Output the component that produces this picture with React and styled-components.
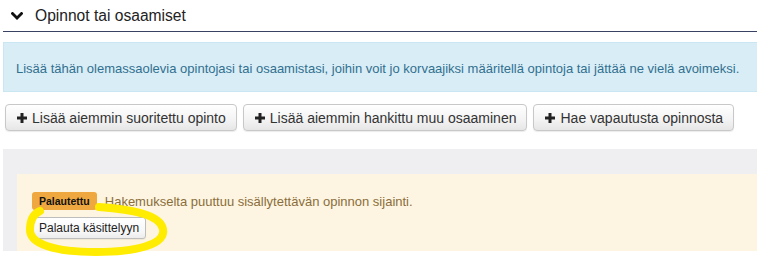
import React from "react";
import styled, { createGlobalStyle } from "styled-components";

const Global = createGlobalStyle`
  html, body { margin: 0; padding: 0; background: #fff; }
  body { font-family: "Liberation Sans", Arial, sans-serif; color: #333; }
`;

const Page = styled.div`
  position: relative;
  width: 757px;
  height: 256px;
  overflow: hidden;
  padding-left: 3px;
  box-sizing: border-box;
`;

const Header = styled.div`
  display: flex;
  align-items: center;
  height: 30px;
  padding-left: 8px;
  gap: 12px;
  border-bottom: 1px solid #3a4264;
  font-size: 15.6px;
  color: #222;
  padding-top: 1px;
  box-sizing: content-box;
`;

const Info = styled.div`
  margin-top: 10px;
  height: 50px;
  box-sizing: border-box;
  display: flex;
  align-items: center;
  padding: 2px 12px 0;
  background: #d9edf7;
  border: 1px solid #c9e6f2;
  border-right: none;
  color: #31708f;
  font-size: 13px;
  white-space: nowrap;
`;

const ButtonRow = styled.div`
  display: flex;
  gap: 6px;
  margin-top: 12px;
  padding-left: 2px;
`;

const Button = styled.button`
  display: inline-flex;
  align-items: center;
  gap: 5px;
  height: 27px;
  padding: 0 10px 0 11px;
  font-family: "Liberation Sans", Arial, sans-serif;
  font-size: 14px;
  color: #333;
  background: linear-gradient(to bottom, #ffffff 0%, #f3f3f3 60%, #e6e6e6 100%);
  border: 1px solid #c8c8c8;
  border-radius: 4px;
  box-shadow: 0 1px 1px rgba(0, 0, 0, 0.08);
  cursor: pointer;
  white-space: nowrap;
`;

const GrayArea = styled.div`
  margin-top: 18px;
  background: #efeef0;
  padding: 25px 0 0 14px;
  height: 102px;
  box-sizing: border-box;
`;

const Notice = styled.div`
  background: #fdf5e1;
  height: 77px;
  box-sizing: border-box;
  padding: 18px 15px 0;
  display: flex;
  flex-direction: column;
  align-items: flex-start;
  gap: 7px;
`;

const MessageLine = styled.div`
  display: flex;
  align-items: center;
  gap: 8px;
  font-size: 13px;
  color: #8a6d3b;
`;

const Badge = styled.span`
  display: inline-flex;
  align-items: center;
  height: 18px;
  padding: 0 7px;
  background: #efa840;
  border-radius: 3px;
  font-size: 10.5px;
  font-weight: bold;
  color: #111;
`;

const SmallButton = styled.button`
  height: 22px;
  padding: 0 6px;
  font-family: "Liberation Sans", Arial, sans-serif;
  font-size: 12px;
  color: #222;
  background: linear-gradient(to bottom, #ffffff 0%, #f6f6f6 70%, #ececec 100%);
  border: 1px solid #bdbdbd;
  border-radius: 3px;
  box-shadow: 0 1px 1px rgba(0, 0, 0, 0.06);
  cursor: pointer;
`;

const Highlight = styled.svg`
  position: absolute;
  left: 0;
  top: 0;
  pointer-events: none;
`;

const Chevron = () => (
  <svg width="12" height="8" viewBox="0 0 12 8">
    <polyline points="1.5,1.5 6,6 10.5,1.5" fill="none" stroke="#111" strokeWidth="2.8" strokeLinecap="square" />
  </svg>
);

const Plus = () => (
  <svg width="10" height="10" viewBox="0 0 10 10">
    <rect x="3.5" y="0" width="3" height="10" fill="#222" />
    <rect x="0" y="3.5" width="10" height="3" fill="#222" />
  </svg>
);

export default function App() {
  return (
    <>
      <Global />
      <Page>
        <Header>
          <Chevron />
          <span>Opinnot tai osaamiset</span>
        </Header>
        <Info>
          Lisää tähän olemassaolevia opintojasi tai osaamistasi, joihin voit jo korvaajiksi määritellä opintoja tai jättää ne vielä avoimeksi.
        </Info>
        <ButtonRow>
          <Button><Plus />Lisää aiemmin suoritettu opinto</Button>
          <Button><Plus />Lisää aiemmin hankittu muu osaaminen</Button>
          <Button><Plus />Hae vapautusta opinnosta</Button>
        </ButtonRow>
        <GrayArea>
          <Notice>
            <MessageLine>
              <Badge>Palautettu</Badge>
              Hakemukselta puuttuu sisällytettävän opinnon sijainti.
            </MessageLine>
            <SmallButton>Palauta käsittelyyn</SmallButton>
          </Notice>
        </GrayArea>
        <Highlight width="757" height="256" viewBox="0 0 757 256">
          <path
            d="M 99 207 C 128 209, 160 214, 163 229 C 166 245, 135 252, 96 252 C 55 252, 30 244, 30 230 C 30 220, 33 214, 40 211"
            fill="none"
            stroke="#ffec00"
            strokeWidth="8"
            strokeLinecap="round"
          />
        </Highlight>
      </Page>
    </>
  );
}
